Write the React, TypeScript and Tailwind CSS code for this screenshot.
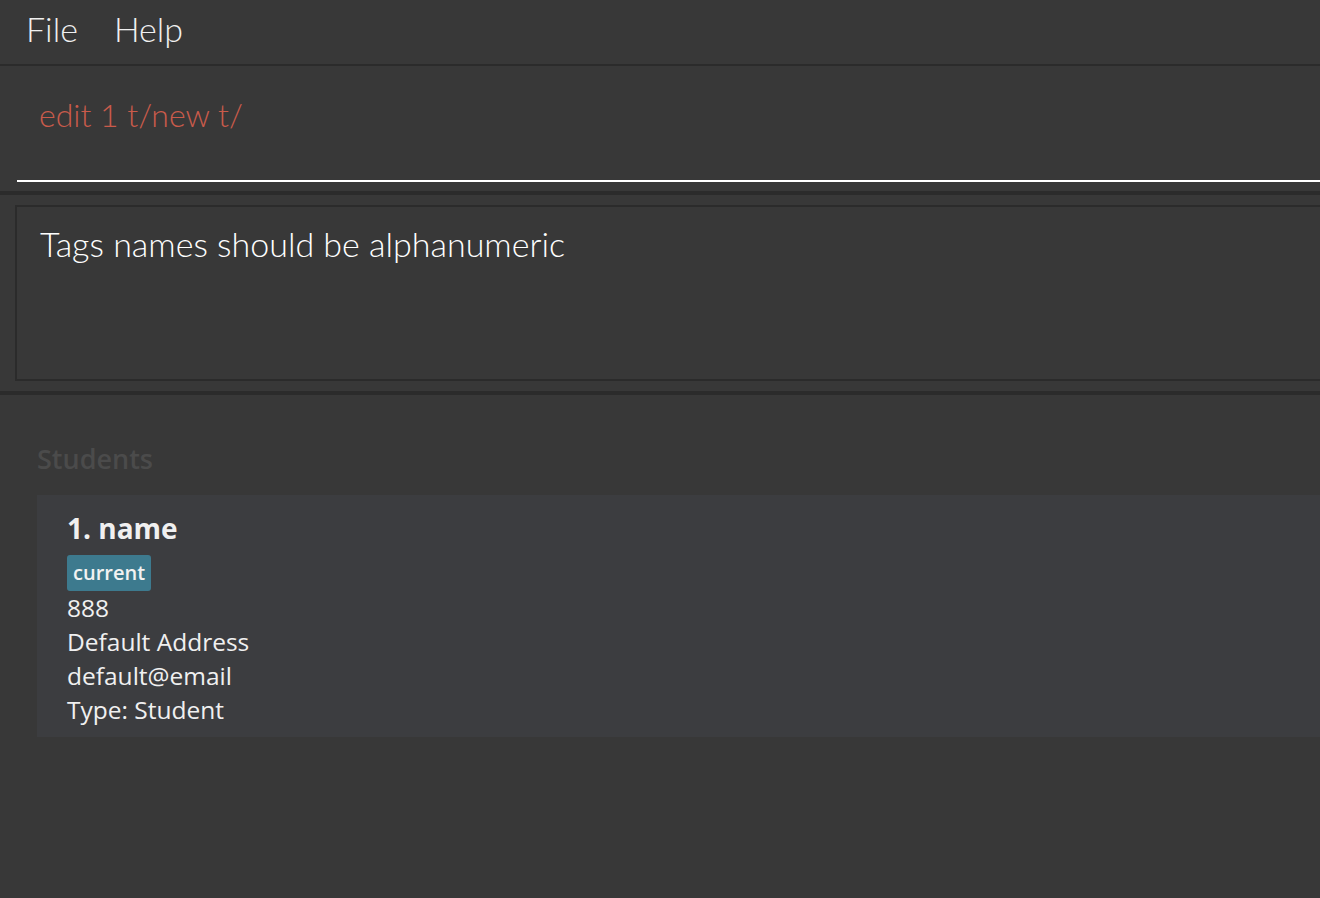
export default function App() {
  const lines = ['888', 'Default Address', 'default@email', 'Type: Student'];
  return (
    <div className="w-[1320px] h-[898px] overflow-hidden bg-[#383838] flex flex-col" style={{ fontFamily: '"Open Sans", "Noto Sans", sans-serif' }}>
      {/* menu bar */}
      <div className="h-[66px] flex items-center gap-[36px] pl-[26px] pb-[6px] border-b-2 border-[#2b2b2b] shrink-0 font-['Lato',sans-serif]">
        <span className="text-[34px] font-light text-[#f0f0f0] leading-none">File</span>
        <span className="text-[34px] font-light text-[#f0f0f0] leading-none">Help</span>
      </div>

      {/* command box */}
      <div className="h-[125px] pl-[17px] pt-[26px] shrink-0 font-['Lato',sans-serif]">
        <div className="h-[90px] border-b-2 border-white pl-[22px]">
          <span className="text-[32px] font-light text-[#c95b4b] leading-[46px]">edit 1 t/new t/</span>
        </div>
      </div>
      <div className="h-[4px] bg-[#2b2b2b] shrink-0" />

      {/* result display */}
      <div className="h-[196px] pl-[15px] pt-[10px] pb-[10px] shrink-0 font-['Lato',sans-serif]">
        <div className="h-full border-2 border-r-0 border-[#2b2b2b] pl-[23px] pt-[14px]">
          <span className="text-[34px] font-light text-white leading-[46px]">Tags names should be alphanumeric</span>
        </div>
      </div>
      <div className="h-[4px] bg-[#2b2b2b] shrink-0" />

      {/* student list */}
      <div className="flex-1 pl-[37px] pt-[44px]">
        <div className="text-[27px] font-semibold text-[#4b4b4b] leading-[40px]">Students</div>
        <div className="mt-[16px] bg-[#3c3d40] h-[242px] pl-[30px] pt-[12px]">
          <div className="text-[28px] font-bold text-[#f0f0f0] leading-[42px]">1. name</div>
          <div className="flex mt-[6px]">
            <span className="bg-[#3d7a8e] text-[#f2f2f2] text-[20px] font-semibold rounded-[3px] px-[6px] leading-[36px] h-[36px]">current</span>
          </div>
          {lines.map((l) => (
            <div key={l} className="text-[24.5px] text-[#f0f0f0] leading-[34px]">{l}</div>
          ))}
        </div>
      </div>
    </div>
  );
}
